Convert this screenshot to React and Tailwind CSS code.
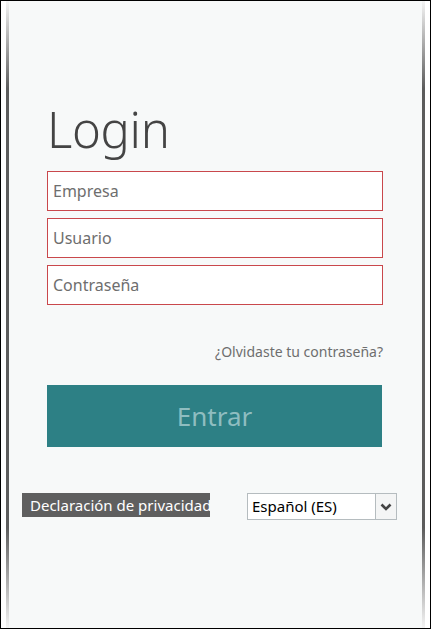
import React from 'react';

const font = { fontFamily: '"Noto Sans", "Open Sans", sans-serif' };

const Field = ({ placeholder, type = 'text' }) => (
  <input
    type={type}
    placeholder={placeholder}
    className="block w-full h-[40px] px-[5px] bg-white border border-[#c9484c] text-[16px] text-[#333] placeholder:text-[#6e6e6e] outline-none"
  />
);

const Edge = () => (
  <div className="w-[3px] bg-[linear-gradient(to_bottom,#f4f4f4,#5c5c5c_14%,#5c5c5c_84%,#f4f4f4)]" />
);

const App = () => {
  return (
    <div className="w-[431px] h-[629px] border border-black bg-white flex overflow-hidden" style={font}>
      <div className="w-[5px]" />
      <Edge />
      <div className="flex-1 bg-[#f7f9f9] flex flex-col">
        <div className="pl-[38px] pr-[39px]">
          <h1 className="mt-[96px] text-[49px] leading-[64px] font-light text-[#444] tracking-[-0.3px]">Login</h1>
          <div className="mt-[10px] flex flex-col gap-[7px]">
            <Field placeholder="Empresa" />
            <Field placeholder="Usuario" />
            <Field placeholder="Contraseña" type="password" />
          </div>
          <div className="mt-[37px] text-right text-[14px] leading-[20px] text-[#6e6e6e]">
            <a href="#">¿Olvidaste tu contraseña?</a>
          </div>
          <button className="mt-[23px] w-[335px] h-[62px] bg-[#2d8085] text-[#8fbdc0] text-[26px]">
            Entrar
          </button>
        </div>
        <div className="mt-[46px] pl-[13px] flex items-start">
          <div className="w-[188px] h-[24px] bg-[#5f5f5f] overflow-hidden whitespace-nowrap pl-[8px] text-white text-[15px] leading-[24px]">
            Declaración de privacidad
          </div>
          <div className="ml-[37px] w-[150px] h-[27px] bg-white border border-[#b5bcbf] flex">
            <span className="flex-1 pl-[4px] text-[15px] leading-[25px] text-black">Español (ES)</span>
            <span className="w-[21px] border-l border-[#b5bcbf] bg-[#f4f5f5] flex items-center justify-center">
              <svg width="12" height="8" viewBox="0 0 12 8">
                <path d="M1.5 1.5 L6 6 L10.5 1.5" stroke="#444" strokeWidth="2.6" fill="none" />
              </svg>
            </span>
          </div>
        </div>
      </div>
      <Edge />
      <div className="w-[5px]" />
    </div>
  );
};

export default App;
